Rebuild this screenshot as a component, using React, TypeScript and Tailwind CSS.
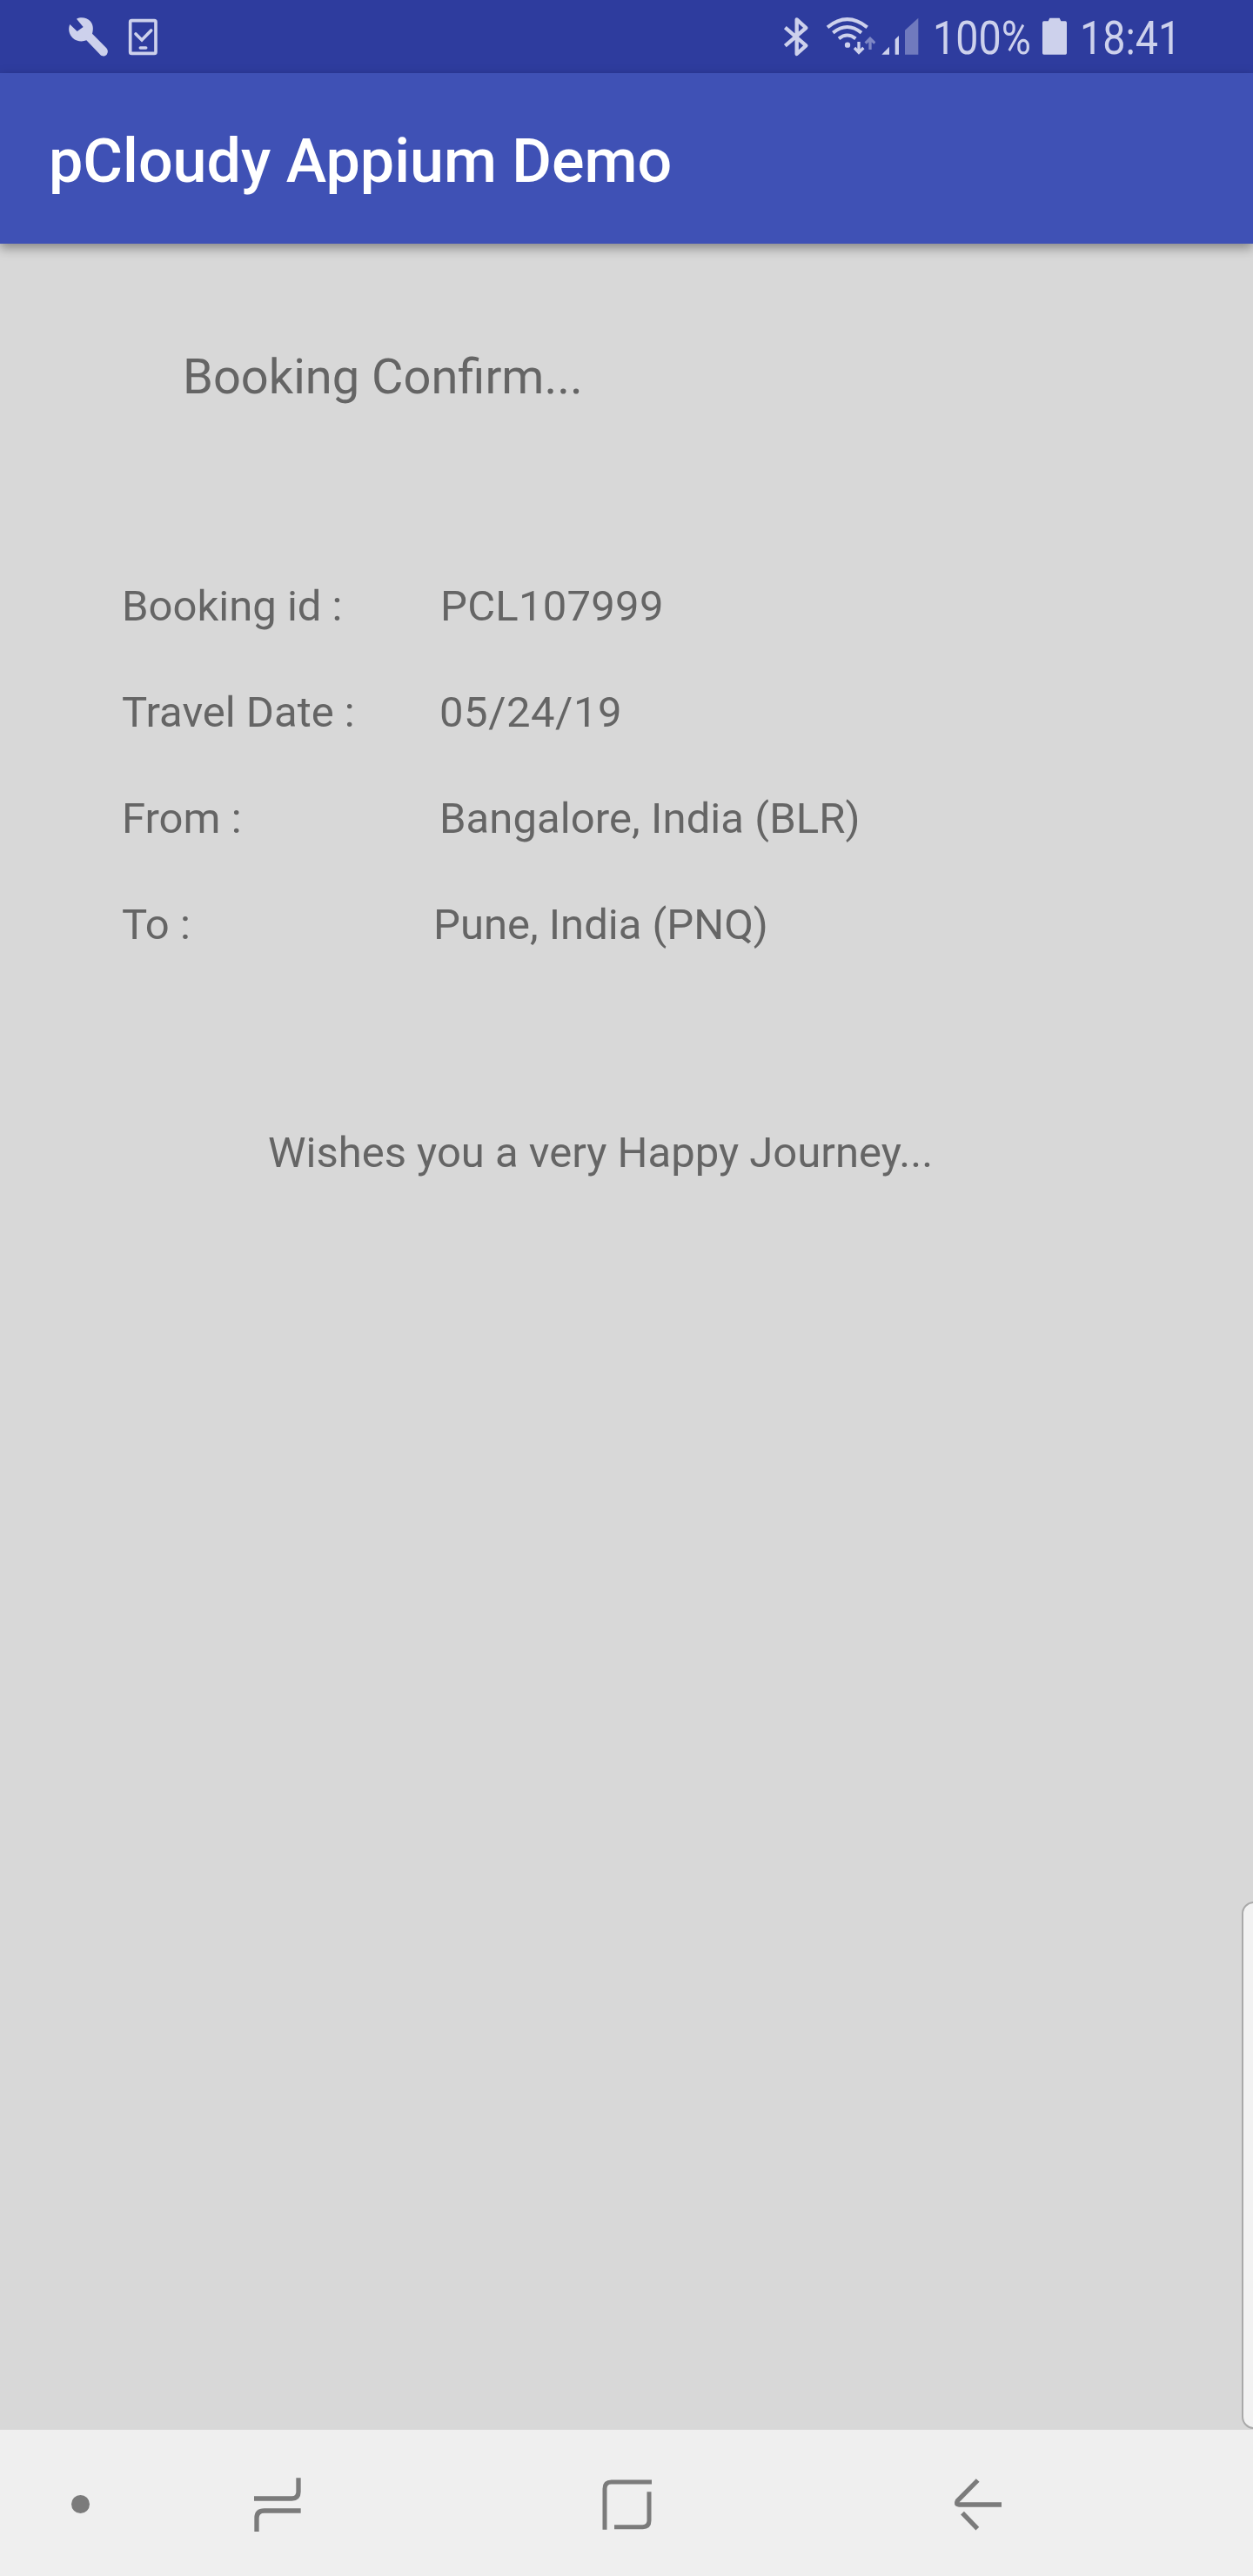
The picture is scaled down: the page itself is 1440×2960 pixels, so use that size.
import type { ReactNode } from 'react';

const details = [
  { label: 'Booking id :', value: 'PCL107999', style: 'pl-[506px] tracking-[0.25px]' },
  { label: 'Travel Date :', value: '05/24/19', style: 'pl-[505px] tracking-[0.55px]' },
  { label: 'From :', value: 'Bangalore, India (BLR)', style: 'pl-[505px] tracking-[0.08px]' },
  { label: 'To :', value: 'Pune, India (PNQ)', style: 'pl-[498px]' },
];

function StatusText({ children, className }: { children: ReactNode; className: string }) {
  return (
    <span className={`block origin-left scale-x-[0.88] whitespace-nowrap pt-[2px] text-[53px] leading-[84px] ${className}`}>
      {children}
    </span>
  );
}

function StatusBar() {
  return (
    <div className="flex h-[84px] w-full bg-[#2e3c9e] text-[#cdd1ec]">
      <svg className="ml-[78px] h-[84px] w-[47px] shrink-0" viewBox="54 0 141 252" fill="currentColor">
        <path d="M84 65C99 57 119 60 131 73C141 84 143 100 138 116L187 166C193 172 193 182 188 188C182 195 172 195 166 189L118 139C103 145 84 143 71 131C58 118 54 101 61 84L86 108L107 93Z" />
      </svg>
      <svg className="ml-[22px] h-[84px] w-[35px] shrink-0" viewBox="261 0 105 252" fill="none" stroke="currentColor" strokeWidth="11">
        <rect x="269" y="71" width="88" height="113" rx="5" />
        <path d="M288 117L309 138L341 105" strokeLinecap="round" />
        <path d="M304 165H323" strokeLinecap="round" />
      </svg>
      <svg className="ml-[718px] h-[84px] w-[30px] shrink-0" viewBox="60 0 90 252" fill="none" stroke="currentColor" strokeWidth="13">
        <path d="M67 95L139 157L107 186V67L139 96L67 158" strokeLinejoin="round" />
      </svg>
      <svg className="ml-[19px] h-[84px] w-[57px] shrink-0" viewBox="207 0 171 252" fill="none" stroke="currentColor" strokeWidth="12">
        <path d="M213 94Q281 39 350 94" />
        <path d="M232 113Q281 73 330 113" />
        <path d="M252 133Q281 110 310 133" />
        <circle cx="282" cy="155" r="9.5" fill="currentColor" stroke="none" />
        <path d="M321 144V180M306 165L321 181L337 165" strokeWidth="10" />
        <path d="M360 171V135M344 149L360 133L376 149" strokeWidth="10" opacity="0.5" />
      </svg>
      <svg className="ml-[7px] h-[84px] w-[43px] shrink-0" viewBox="399 0 129 252" fill="currentColor">
        <path d="M400 188L426 161V188ZM446 136L459 123V188H446Z" />
        <path d="M480 104L526 62V188H480Z" opacity="0.42" />
      </svg>
      <StatusText className="ml-[16px] w-[125px]">100%</StatusText>
      <svg className="h-[84px] w-[30px] shrink-0" viewBox="411 0 90 252" fill="currentColor">
        <path d="M419 73H434L439 62H473L478 73H493Q498 73 498 79V183Q498 188 493 188H419Q414 188 414 183V79Q414 73 419 73Z" />
      </svg>
      <StatusText className="ml-[14px] w-[130px]">18:41</StatusText>
    </div>
  );
}

function NavigationBar() {
  return (
    <nav className="flex h-[168px] w-full items-center bg-[#efefef] text-[#7b7b7b]">
      <span className="ml-[82px] mt-[3px] size-[21px] rounded-full bg-current" />
      <svg className="ml-[188px] mt-[3px] h-[64px] w-[56px]" viewBox="723 76 168 192" fill="none" stroke="currentColor" strokeWidth="16">
        <path d="M726 151H856Q879 151 879 128V80" />
        <path d="M887 193H761Q735 193 735 218V265" />
      </svg>
      <svg className="ml-[344px] mt-[3px] h-[60px] w-[60px]" viewBox="63 83 180 180" fill="none" stroke="currentColor" strokeWidth="15">
        <path d="M75 259V118Q75 95 98 95H237" />
        <path d="M228 129V228Q228 250 206 250H108" />
      </svg>
      <svg className="ml-[344px] mt-[3px] h-[62px] w-[60px]" viewBox="75 80 180 186" fill="none" stroke="currentColor" strokeWidth="16">
        <path d="M161 89L91 160Q84 173 96 173H243" />
        <path d="M108 202L160 256" />
      </svg>
    </nav>
  );
}

export default function App() {
  return (
    <div className="relative flex h-[2960px] w-[1440px] flex-col overflow-hidden bg-[#d8d8d8] font-['Roboto',sans-serif] text-[#656565]">
      <StatusBar />
      <header className="relative h-[196px] w-full bg-[#3f51b5] pl-[56px] pt-[3px] shadow-[0_5px_12px_rgba(0,0,0,0.38)]">
        <h1 className="whitespace-nowrap text-[70px] font-medium leading-[196px] text-white">pCloudy Appium Demo</h1>
      </header>
      <main className="flex grow flex-col pt-[120px]">
        <h2 className="pl-[210px] text-[56px] leading-[66px]">Booking Confirm...</h2>
        <dl className="mt-[170px] text-[49px] leading-[122px]">
          {details.map((item) => (
            <div key={item.label} className="grid h-[122px] whitespace-nowrap">
              <dt className="col-start-1 row-start-1 pl-[140px]">{item.label}</dt>
              <dd className={`col-start-1 row-start-1 ${item.style}`}>{item.value}</dd>
            </div>
          ))}
        </dl>
        <p className="mt-[172px] pl-[308px] text-[49px] leading-[58px]">Wishes you a very Happy Journey...</p>
      </main>
      <div className="absolute left-[1427px] top-[2185px] h-[606px] w-[40px] rounded-[14px] border-2 border-[#a9a9a9] bg-[#f2f2f2]" />
      <NavigationBar />
    </div>
  );
}
